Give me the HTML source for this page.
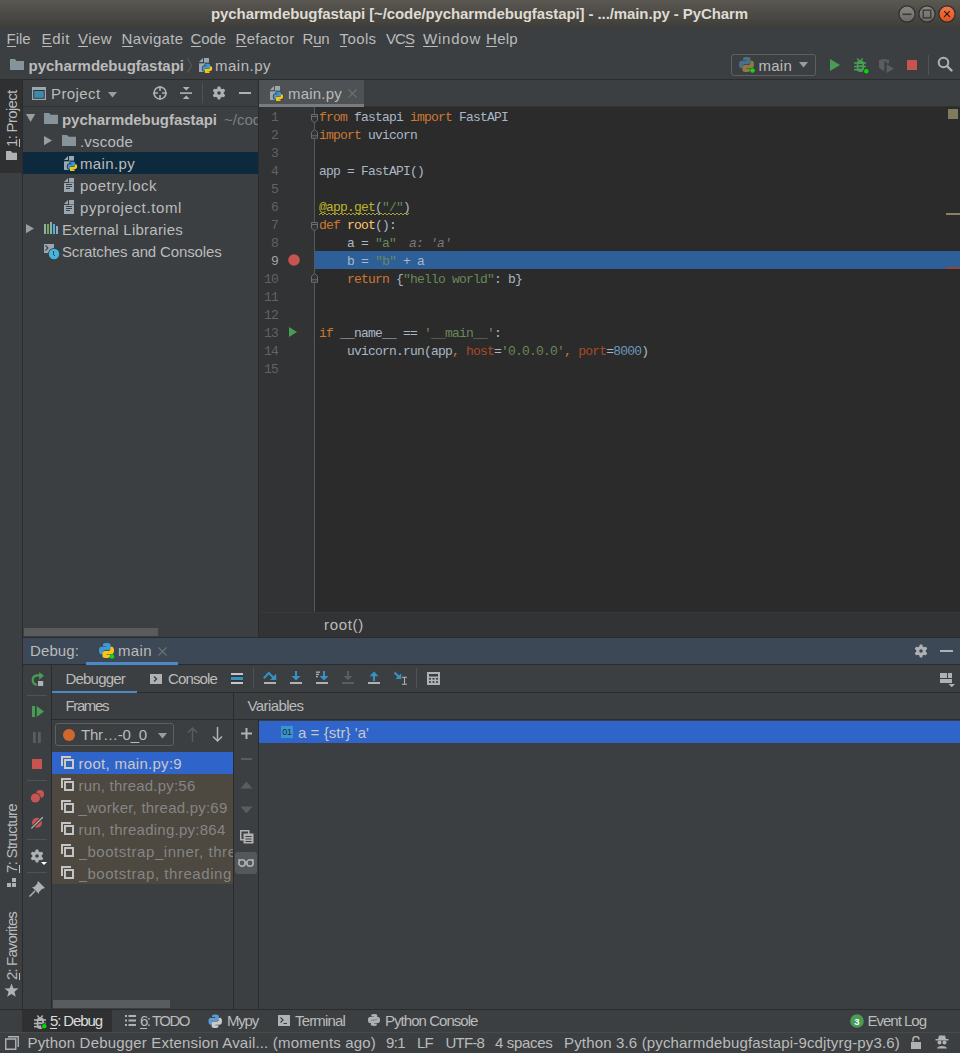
<!DOCTYPE html>
<html><head><meta charset="utf-8"><style>
html,body{margin:0;padding:0;}
body{width:960px;height:1053px;position:relative;overflow:hidden;background:#3c3f41;font-family:'Liberation Sans', sans-serif;}
u{text-decoration:none;background:linear-gradient(currentColor,currentColor) no-repeat 0 100%/100% 1px;}
</style></head><body>
<div style="position:absolute;left:0px;top:0px;width:960px;height:28px;background:linear-gradient(#5b5852,#3e3d39);"></div>
<div id="t0" style="position:absolute;left:211px;top:6.30px;font-family:'Liberation Sans', sans-serif;font-size:15px;line-height:15px;color:#dfdbd2;font-weight:bold;white-space:pre;letter-spacing:-0.095px;">pycharmdebugfastapi [~/code/pycharmdebugfastapi] - .../main.py - PyCharm</div>
<svg style="position:absolute;left:897px;top:4px;" width="60" height="20" viewBox="0 0 60 20">
<defs><linearGradient id="gb" x1="0" y1="0" x2="0" y2="1"><stop offset="0" stop-color="#8a8883"/><stop offset="1" stop-color="#6a6864"/></linearGradient>
<linearGradient id="gc" x1="0" y1="0" x2="0" y2="1"><stop offset="0" stop-color="#f37a49"/><stop offset="1" stop-color="#e0501c"/></linearGradient></defs>
<circle cx="10" cy="10" r="8.1" fill="url(#gb)" stroke="#2f2e2b" stroke-width="1.2"/>
<rect x="5.5" y="9.5" width="9" height="1.6" fill="#3b3a36"/>
<circle cx="30" cy="10" r="8.1" fill="url(#gb)" stroke="#2f2e2b" stroke-width="1.2"/>
<rect x="26.2" y="6.2" width="7.6" height="7.6" fill="none" stroke="#3b3a36" stroke-width="1.4"/>
<circle cx="50" cy="10" r="8.1" fill="url(#gc)" stroke="#2f2e2b" stroke-width="1.2"/>
<path d="M47.2 7.2 L52.8 12.8 M52.8 7.2 L47.2 12.8" stroke="#2e1a10" stroke-width="1.2"/><circle cx="50" cy="10" r="0.9" fill="#2e1a10"/>
</svg>
<div id="t1" style="position:absolute;left:6.5px;top:31.30px;font-family:'Liberation Sans', sans-serif;font-size:15px;line-height:15px;color:#bbbbbb;font-weight:normal;white-space:pre;letter-spacing:-0.047px;"><u>F</u>ile</div>
<div id="t2" style="position:absolute;left:41.5px;top:31.30px;font-family:'Liberation Sans', sans-serif;font-size:15px;line-height:15px;color:#bbbbbb;font-weight:normal;white-space:pre;letter-spacing:0.660px;"><u>E</u>dit</div>
<div id="t3" style="position:absolute;left:78px;top:31.30px;font-family:'Liberation Sans', sans-serif;font-size:15px;line-height:15px;color:#bbbbbb;font-weight:normal;white-space:pre;letter-spacing:0.438px;"><u>V</u>iew</div>
<div id="t4" style="position:absolute;left:121.5px;top:31.30px;font-family:'Liberation Sans', sans-serif;font-size:15px;line-height:15px;color:#bbbbbb;font-weight:normal;white-space:pre;letter-spacing:0.348px;"><u>N</u>avigate</div>
<div id="t5" style="position:absolute;left:190.5px;top:31.30px;font-family:'Liberation Sans', sans-serif;font-size:15px;line-height:15px;color:#bbbbbb;font-weight:normal;white-space:pre;letter-spacing:-0.094px;"><u>C</u>ode</div>
<div id="t6" style="position:absolute;left:235.5px;top:31.30px;font-family:'Liberation Sans', sans-serif;font-size:15px;line-height:15px;color:#bbbbbb;font-weight:normal;white-space:pre;letter-spacing:0.287px;"><u>R</u>efactor</div>
<div id="t7" style="position:absolute;left:302.5px;top:31.30px;font-family:'Liberation Sans', sans-serif;font-size:15px;line-height:15px;color:#bbbbbb;font-weight:normal;white-space:pre;letter-spacing:-0.177px;">R<u>u</u>n</div>
<div id="t8" style="position:absolute;left:339.5px;top:31.30px;font-family:'Liberation Sans', sans-serif;font-size:15px;line-height:15px;color:#bbbbbb;font-weight:normal;white-space:pre;letter-spacing:0.394px;"><u>T</u>ools</div>
<div id="t9" style="position:absolute;left:386px;top:31.30px;font-family:'Liberation Sans', sans-serif;font-size:15px;line-height:15px;color:#bbbbbb;font-weight:normal;white-space:pre;letter-spacing:-0.953px;">VC<u>S</u></div>
<div id="t10" style="position:absolute;left:423px;top:31.30px;font-family:'Liberation Sans', sans-serif;font-size:15px;line-height:15px;color:#bbbbbb;font-weight:normal;white-space:pre;letter-spacing:0.771px;"><u>W</u>indow</div>
<div id="t11" style="position:absolute;left:486px;top:31.30px;font-family:'Liberation Sans', sans-serif;font-size:15px;line-height:15px;color:#bbbbbb;font-weight:normal;white-space:pre;letter-spacing:0.281px;"><u>H</u>elp</div>
<div style="position:absolute;left:0px;top:79px;width:960px;height:1px;background:#2b2b2b;"></div>
<svg style="position:absolute;left:10px;top:58px;" width="15" height="13" viewBox="0 0 15 13"><path d="M0 1 H5 L6.5 3 H14 V12 H0 Z" fill="#87939a"/></svg>
<div id="t12" style="position:absolute;left:28.5px;top:58.30px;font-family:'Liberation Sans', sans-serif;font-size:15px;line-height:15px;color:#bbbbbb;font-weight:bold;white-space:pre;letter-spacing:-0.020px;">pycharmdebugfastapi</div>
<svg style="position:absolute;left:186px;top:57px;" width="8" height="17" viewBox="0 0 8 17"><path d="M1.4 1.2 L5.6 8.5 L1.4 15.5" fill="none" stroke="#5d6062" stroke-width="1"/></svg>
<svg style="position:absolute;left:199px;top:58px;" width="15" height="15" viewBox="0 0 15 15"><path d="M0 4 L4 0 V4 Z" fill="#9aa7b0"/><path d="M5 0 H10 V4.6 H5 Z" fill="#9aa7b0"/><path d="M0 5.3 H10 V14 H0 Z" fill="#9aa7b0"/><g transform="translate(3.6 5.8) scale(0.6)" fill="#3c3f41" stroke="#3c3f41" stroke-width="2.67"><path d="M7.9 0 C4 0 4.3 1.7 4.3 1.7 V3.4 H8 V4 H2.8 C2.8 4 0 3.7 0 8 C0 12.2 2.4 12 2.4 12 H3.9 V10 C3.9 10 3.8 7.6 6.3 7.6 H10 C10 7.6 12.3 7.6 12.3 5.4 V1.9 C12.3 1.9 12.6 0 7.9 0 Z"/><path d="M8.1 16 C12 16 11.7 14.3 11.7 14.3 V12.6 H8 V12 H13.2 C13.2 12 16 12.3 16 8 C16 3.8 13.6 4 13.6 4 H12.1 V6 C12.1 6 12.2 8.4 9.7 8.4 H6 C6 8.4 3.7 8.4 3.7 10.6 V14.1 C3.7 14.1 3.4 16 8.1 16 Z"/></g><g transform="translate(3.6 5.8) scale(0.6)"><path d="M7.9 0 C4 0 4.3 1.7 4.3 1.7 V3.4 H8 V4 H2.8 C2.8 4 0 3.7 0 8 C0 12.2 2.4 12 2.4 12 H3.9 V10 C3.9 10 3.8 7.6 6.3 7.6 H10 C10 7.6 12.3 7.6 12.3 5.4 V1.9 C12.3 1.9 12.6 0 7.9 0 Z" fill="#3d9ad6"/><path d="M8.1 16 C12 16 11.7 14.3 11.7 14.3 V12.6 H8 V12 H13.2 C13.2 12 16 12.3 16 8 C16 3.8 13.6 4 13.6 4 H12.1 V6 C12.1 6 12.2 8.4 9.7 8.4 H6 C6 8.4 3.7 8.4 3.7 10.6 V14.1 C3.7 14.1 3.4 16 8.1 16 Z" fill="#f5c518"/></g></svg>
<div id="t13" style="position:absolute;left:215px;top:58.30px;font-family:'Liberation Sans', sans-serif;font-size:15px;line-height:15px;color:#bbbbbb;font-weight:normal;white-space:pre;letter-spacing:0.496px;">main.py</div>
<div style="position:absolute;left:731px;top:54px;width:83px;height:20px;border:1px solid #5e6060;border-radius:3px;"></div>
<svg style="position:absolute;left:739px;top:57px;" width="16" height="16" viewBox="0 0 16 16"><g transform="translate(0 0) scale(0.9375)"><path d="M7.9 0 C4 0 4.3 1.7 4.3 1.7 V3.4 H8 V4 H2.8 C2.8 4 0 3.7 0 8 C0 12.2 2.4 12 2.4 12 H3.9 V10 C3.9 10 3.8 7.6 6.3 7.6 H10 C10 7.6 12.3 7.6 12.3 5.4 V1.9 C12.3 1.9 12.6 0 7.9 0 Z" fill="#4a6f8a"/><path d="M8.1 16 C12 16 11.7 14.3 11.7 14.3 V12.6 H8 V12 H13.2 C13.2 12 16 12.3 16 8 C16 3.8 13.6 4 13.6 4 H12.1 V6 C12.1 6 12.2 8.4 9.7 8.4 H6 C6 8.4 3.7 8.4 3.7 10.6 V14.1 C3.7 14.1 3.4 16 8.1 16 Z" fill="#8c7b3e"/></g><circle cx="13.5" cy="13.5" r="2.3" fill="#14d414"/></svg>
<div id="t14" style="position:absolute;left:758.5px;top:58.30px;font-family:'Liberation Sans', sans-serif;font-size:15px;line-height:15px;color:#bbbbbb;font-weight:normal;white-space:pre;letter-spacing:0.246px;">main</div>
<svg style="position:absolute;left:799px;top:62px;" width="10" height="6" viewBox="0 0 10 6"><path d="M0 0 H9 L4.5 5.5 Z" fill="#9a9c9e"/></svg>
<svg style="position:absolute;left:830px;top:59px;" width="11" height="12" viewBox="0 0 11 12"><path d="M0 0 L10 6 L0 12 Z" fill="#499c54"/></svg>
<svg style="position:absolute;left:850px;top:54px;" width="22" height="22" viewBox="0 0 22 22"><path d="M7.3 4.4 L9.4 6.9 M12.7 4.4 L10.6 6.9" stroke="#499c54" stroke-width="1.5"/>
<rect x="6.8" y="6.4" width="7.2" height="11.5" rx="3.2" fill="#499c54"/>
<rect x="4" y="8.2" width="12" height="1.6" fill="#499c54"/><rect x="4" y="11.7" width="12" height="1.6" fill="#499c54"/><rect x="4" y="14.9" width="12" height="1.6" fill="#499c54"/>
<rect x="8.4" y="10" width="3.8" height="1.3" fill="#3c3f41"/><rect x="8.4" y="13.2" width="3.8" height="1.3" fill="#3c3f41"/>
<circle cx="16.3" cy="17.2" r="3" fill="#3c3f41"/><circle cx="16.3" cy="17.2" r="2.2" fill="#00e000"/></svg>
<svg style="position:absolute;left:874px;top:54px;" width="24" height="22" viewBox="0 0 24 22"><g transform="translate(-874 -54)" fill="#5c5d5e"><path d="M879 60 L884 59 L889 60 V63.2 H886.3 V61.3 H884.3 V69.5 Q884.3 71 882.8 70.6 L879.8 68.2 Q879 67.5 879 66.5 Z"/><path d="M886.7 64.3 L894 68.6 L886.7 73 Z"/></g></svg>
<div style="position:absolute;left:907px;top:60px;width:10px;height:10px;background:#c75450;"></div>
<div style="position:absolute;left:928px;top:55px;width:1px;height:20px;background:#505355;"></div>
<svg style="position:absolute;left:937px;top:56px;" width="17" height="17" viewBox="0 0 17 17"><circle cx="6.5" cy="6.5" r="4.8" fill="none" stroke="#afb1b3" stroke-width="2"/><path d="M10 10 L14.5 14.5" stroke="#afb1b3" stroke-width="2.4" stroke-linecap="round"/></svg>
<div style="position:absolute;left:22px;top:80px;width:1px;height:929px;background:#2b2b2b;"></div>
<div style="position:absolute;left:0px;top:80px;width:22px;height:93px;background:#2e3031;"></div>
<div style="position:absolute;left:23px;top:106px;width:235px;height:1px;background:#323232;"></div>
<svg style="position:absolute;left:32px;top:87px;" width="14" height="13" viewBox="0 0 14 13"><rect x="0" y="0" width="14" height="13" fill="#9aa7b0"/><rect x="1.3" y="3" width="11.4" height="8.7" fill="#2d2f30"/><rect x="2.2" y="4" width="9.6" height="6.8" fill="#3e8aab"/></svg>
<div id="t15" style="position:absolute;left:51px;top:85.80px;font-family:'Liberation Sans', sans-serif;font-size:15px;line-height:15px;color:#bbbbbb;font-weight:normal;white-space:pre;letter-spacing:0.402px;">Project</div>
<svg style="position:absolute;left:108px;top:92px;" width="10" height="6" viewBox="0 0 10 6"><path d="M0 0 H9 L4.5 5.5 Z" fill="#9a9c9e"/></svg>
<svg style="position:absolute;left:152px;top:85px;" width="16" height="16" viewBox="0 0 16 16"><circle cx="8" cy="8" r="6" fill="none" stroke="#afb1b3" stroke-width="1.6"/><path d="M8 1 V15 M1 8 H15" stroke="#afb1b3" stroke-width="1.6"/><circle cx="8" cy="8" r="2.2" fill="#3c3f41"/></svg>
<svg style="position:absolute;left:176px;top:82px;" width="20" height="20" viewBox="0 0 20 20"><g transform="translate(-176 -82)"><rect x="180" y="92.3" width="12" height="1.6" fill="#afb1b3"/><path d="M182.8 87 H189.7 L186.25 90.5 Z M182.8 99 H189.7 L186.25 95.6 Z" fill="#afb1b3"/></g></svg>
<div style="position:absolute;left:202px;top:83px;width:1px;height:20px;background:#505355;"></div>
<svg style="position:absolute;left:212px;top:86px;" width="14" height="14" viewBox="0 0 14 14"><g fill="#afb1b3"><circle cx="7" cy="7" r="4.8"/>
<rect x="5.5" y="0.5" width="3" height="13" rx="0.8"/>
<rect x="5.5" y="0.5" width="3" height="13" rx="0.8" transform="rotate(60 7 7)"/><rect x="5.5" y="0.5" width="3" height="13" rx="0.8" transform="rotate(-60 7 7)"/></g>
<circle cx="7" cy="7" r="1.8" fill="#3c3f41"/></svg>
<div style="position:absolute;left:239px;top:92px;width:12px;height:2px;background:#afb1b3;"></div>
<div style="position:absolute;left:23px;top:152px;width:235px;height:22px;background:#0d293e;"></div>
<svg style="position:absolute;left:26px;top:114px;" width="10" height="9" viewBox="0 0 10 9"><path d="M0 0 H9.2 L4.6 8 Z" fill="#9a9c9e"/></svg>
<svg style="position:absolute;left:44px;top:113px;" width="16" height="13" viewBox="0 0 16 13"><path d="M0 0 H5 L6.8 1.7 H14 V11 H0 Z" fill="#87939a"/></svg>
<div id="t16" style="position:absolute;left:62px;top:112.30px;font-family:'Liberation Sans', sans-serif;font-size:15px;line-height:15px;color:#bbbbbb;font-weight:bold;white-space:pre;letter-spacing:-0.046px;">pycharmdebugfastapi</div>
<div id="t17" style="position:absolute;left:224px;top:112.30px;font-family:'Liberation Sans', sans-serif;font-size:15px;line-height:15px;color:#7d7f81;font-weight:normal;white-space:pre;letter-spacing:0.000px;">~/code/pycharmdebugfastapi</div>
<svg style="position:absolute;left:44px;top:136px;" width="9" height="10" viewBox="0 0 9 10"><path d="M0 0 L8 4.6 L0 9.2 Z" fill="#9a9c9e"/></svg>
<svg style="position:absolute;left:62px;top:135px;" width="16" height="13" viewBox="0 0 16 13"><path d="M0 0 H5 L6.8 1.7 H14 V11 H0 Z" fill="#87939a"/></svg>
<div id="t18" style="position:absolute;left:80px;top:134.30px;font-family:'Liberation Sans', sans-serif;font-size:15px;line-height:15px;color:#bbbbbb;font-weight:normal;white-space:pre;letter-spacing:0.185px;">.vscode</div>
<svg style="position:absolute;left:64px;top:156px;" width="15" height="15" viewBox="0 0 15 15"><path d="M0 4 L4 0 V4 Z" fill="#9aa7b0"/><path d="M5 0 H10 V4.6 H5 Z" fill="#9aa7b0"/><path d="M0 5.3 H10 V14 H0 Z" fill="#9aa7b0"/><g transform="translate(3.6 5.8) scale(0.6)" fill="#0d293e" stroke="#0d293e" stroke-width="2.67"><path d="M7.9 0 C4 0 4.3 1.7 4.3 1.7 V3.4 H8 V4 H2.8 C2.8 4 0 3.7 0 8 C0 12.2 2.4 12 2.4 12 H3.9 V10 C3.9 10 3.8 7.6 6.3 7.6 H10 C10 7.6 12.3 7.6 12.3 5.4 V1.9 C12.3 1.9 12.6 0 7.9 0 Z"/><path d="M8.1 16 C12 16 11.7 14.3 11.7 14.3 V12.6 H8 V12 H13.2 C13.2 12 16 12.3 16 8 C16 3.8 13.6 4 13.6 4 H12.1 V6 C12.1 6 12.2 8.4 9.7 8.4 H6 C6 8.4 3.7 8.4 3.7 10.6 V14.1 C3.7 14.1 3.4 16 8.1 16 Z"/></g><g transform="translate(3.6 5.8) scale(0.6)"><path d="M7.9 0 C4 0 4.3 1.7 4.3 1.7 V3.4 H8 V4 H2.8 C2.8 4 0 3.7 0 8 C0 12.2 2.4 12 2.4 12 H3.9 V10 C3.9 10 3.8 7.6 6.3 7.6 H10 C10 7.6 12.3 7.6 12.3 5.4 V1.9 C12.3 1.9 12.6 0 7.9 0 Z" fill="#3d9ad6"/><path d="M8.1 16 C12 16 11.7 14.3 11.7 14.3 V12.6 H8 V12 H13.2 C13.2 12 16 12.3 16 8 C16 3.8 13.6 4 13.6 4 H12.1 V6 C12.1 6 12.2 8.4 9.7 8.4 H6 C6 8.4 3.7 8.4 3.7 10.6 V14.1 C3.7 14.1 3.4 16 8.1 16 Z" fill="#f5c518"/></g></svg>
<div id="t19" style="position:absolute;left:80px;top:156.30px;font-family:'Liberation Sans', sans-serif;font-size:15px;line-height:15px;color:#bbbbbb;font-weight:normal;white-space:pre;letter-spacing:0.353px;">main.py</div>
<svg style="position:absolute;left:64px;top:178px;" width="11" height="15" viewBox="0 0 11 15"><path d="M0 4 L4 0 V4 Z" fill="#9aa7b0"/><path d="M5 0 H10 V4.5 H5 Z" fill="#9aa7b0"/><path d="M0 5 H10 V14 H0 Z" fill="#9aa7b0"/><rect x="2" y="6" width="6" height="1" fill="#3c3f41"/><rect x="2" y="8" width="6" height="1" fill="#3c3f41"/><rect x="2" y="10" width="4" height="1" fill="#3c3f41"/></svg>
<div id="t20" style="position:absolute;left:80px;top:178.30px;font-family:'Liberation Sans', sans-serif;font-size:15px;line-height:15px;color:#bbbbbb;font-weight:normal;white-space:pre;letter-spacing:0.507px;">poetry.lock</div>
<svg style="position:absolute;left:64px;top:200px;" width="11" height="15" viewBox="0 0 11 15"><path d="M0 4 L4 0 V4 Z" fill="#9aa7b0"/><path d="M5 0 H10 V4.5 H5 Z" fill="#9aa7b0"/><path d="M0 5 H10 V14 H0 Z" fill="#9aa7b0"/><rect x="2" y="6" width="6" height="1" fill="#3c3f41"/><rect x="2" y="8" width="6" height="1" fill="#3c3f41"/><rect x="2" y="10" width="4" height="1" fill="#3c3f41"/></svg>
<div id="t21" style="position:absolute;left:80px;top:200.30px;font-family:'Liberation Sans', sans-serif;font-size:15px;line-height:15px;color:#bbbbbb;font-weight:normal;white-space:pre;letter-spacing:0.616px;">pyproject.toml</div>
<svg style="position:absolute;left:26px;top:224px;" width="9" height="10" viewBox="0 0 9 10"><path d="M0 0 L8 4.6 L0 9.2 Z" fill="#9a9c9e"/></svg>
<svg style="position:absolute;left:44px;top:222px;" width="15" height="12" viewBox="0 0 15 12"><rect x="0" y="2" width="2" height="10" fill="#9aa7b0"/><rect x="3" y="2" width="2" height="10" fill="#62b543"/><rect x="6" y="0" width="2" height="12" fill="#9aa7b0"/><rect x="9" y="2" width="2" height="10" fill="#40b6e0"/><rect x="12" y="4" width="2" height="8" fill="#9aa7b0"/></svg>
<div id="t22" style="position:absolute;left:62px;top:222.30px;font-family:'Liberation Sans', sans-serif;font-size:15px;line-height:15px;color:#bbbbbb;font-weight:normal;white-space:pre;letter-spacing:0.238px;">External Libraries</div>
<svg style="position:absolute;left:44px;top:244px;" width="17" height="17" viewBox="0 0 17 17"><path d="M0 0 H10 V9 H0 Z" fill="#9aa7b0"/><path d="M1.5 1.5 L4 4 L1.5 6.5" stroke="#3c3f41" fill="none" stroke-width="1.1"/><circle cx="10" cy="10" r="6" fill="#3c3f41"/><circle cx="10" cy="10" r="5.2" fill="#40b6e0"/><path d="M9.5 7 V10.5 L11 12" stroke="#3c3f41" fill="none" stroke-width="1"/></svg>
<div id="t23" style="position:absolute;left:62px;top:244.30px;font-family:'Liberation Sans', sans-serif;font-size:15px;line-height:15px;color:#bbbbbb;font-weight:normal;white-space:pre;letter-spacing:-0.141px;">Scratches and Consoles</div>
<div style="position:absolute;left:24px;top:628px;width:134px;height:8px;background:#595b5d;"></div>
<div id="t24" style="position:absolute;left:4.30px;top:146.50px;transform-origin:0 0;transform:rotate(-90deg);font-family:'Liberation Sans', sans-serif;font-size:15px;line-height:15px;color:#bbbbbb;font-weight:normal;white-space:pre;letter-spacing:-0.688px;"><u>1</u>: Project</div>
<svg style="position:absolute;left:6px;top:151px;" width="12" height="10" viewBox="0 0 12 10"><path d="M0 0 H5 L6.2 1.8 H11 V9 H0 Z" fill="#afb1b3"/></svg>
<div id="t25" style="position:absolute;left:4.30px;top:872.50px;transform-origin:0 0;transform:rotate(-90deg);font-family:'Liberation Sans', sans-serif;font-size:15px;line-height:15px;color:#bbbbbb;font-weight:normal;white-space:pre;letter-spacing:-0.712px;"><u>7</u>: Structure</div>
<svg style="position:absolute;left:7px;top:878px;" width="10" height="10" viewBox="0 0 10 10"><rect x="0" y="5" width="4" height="4" fill="#afb1b3"/><rect x="5" y="5" width="4" height="4" fill="#afb1b3"/><rect x="5" y="0" width="4" height="4" fill="#afb1b3"/></svg>
<div id="t26" style="position:absolute;left:4.30px;top:980.00px;transform-origin:0 0;transform:rotate(-90deg);font-family:'Liberation Sans', sans-serif;font-size:15px;line-height:15px;color:#bbbbbb;font-weight:normal;white-space:pre;letter-spacing:-0.865px;"><u>2</u>: Favorites</div>
<svg style="position:absolute;left:4px;top:983px;" width="15" height="15" viewBox="0 0 15 15"><path d="M7.5 0.5 L9.3 5.3 L14.5 5.5 L10.4 8.7 L11.8 13.8 L7.5 10.9 L3.2 13.8 L4.6 8.7 L0.5 5.5 L5.7 5.3 Z" fill="#afb1b3"/></svg>
<div style="position:absolute;left:258px;top:80px;width:1px;height:558px;background:#2b2b2b;"></div>
<div style="position:absolute;left:259px;top:80px;width:701px;height:27px;background:#3c3f41;"></div>
<div style="position:absolute;left:259px;top:80px;width:105px;height:24px;background:#4e5254;"></div>
<div style="position:absolute;left:259px;top:104px;width:105px;height:3px;background:#787c80;"></div>
<div style="position:absolute;left:364px;top:106px;width:596px;height:1px;background:#323232;"></div>
<svg style="position:absolute;left:270px;top:86px;" width="15" height="15" viewBox="0 0 15 15"><path d="M0 4 L4 0 V4 Z" fill="#9aa7b0"/><path d="M5 0 H10 V4.6 H5 Z" fill="#9aa7b0"/><path d="M0 5.3 H10 V14 H0 Z" fill="#9aa7b0"/><g transform="translate(3.6 5.8) scale(0.6)" fill="#3c3f41" stroke="#3c3f41" stroke-width="2.67"><path d="M7.9 0 C4 0 4.3 1.7 4.3 1.7 V3.4 H8 V4 H2.8 C2.8 4 0 3.7 0 8 C0 12.2 2.4 12 2.4 12 H3.9 V10 C3.9 10 3.8 7.6 6.3 7.6 H10 C10 7.6 12.3 7.6 12.3 5.4 V1.9 C12.3 1.9 12.6 0 7.9 0 Z"/><path d="M8.1 16 C12 16 11.7 14.3 11.7 14.3 V12.6 H8 V12 H13.2 C13.2 12 16 12.3 16 8 C16 3.8 13.6 4 13.6 4 H12.1 V6 C12.1 6 12.2 8.4 9.7 8.4 H6 C6 8.4 3.7 8.4 3.7 10.6 V14.1 C3.7 14.1 3.4 16 8.1 16 Z"/></g><g transform="translate(3.6 5.8) scale(0.6)"><path d="M7.9 0 C4 0 4.3 1.7 4.3 1.7 V3.4 H8 V4 H2.8 C2.8 4 0 3.7 0 8 C0 12.2 2.4 12 2.4 12 H3.9 V10 C3.9 10 3.8 7.6 6.3 7.6 H10 C10 7.6 12.3 7.6 12.3 5.4 V1.9 C12.3 1.9 12.6 0 7.9 0 Z" fill="#3d9ad6"/><path d="M8.1 16 C12 16 11.7 14.3 11.7 14.3 V12.6 H8 V12 H13.2 C13.2 12 16 12.3 16 8 C16 3.8 13.6 4 13.6 4 H12.1 V6 C12.1 6 12.2 8.4 9.7 8.4 H6 C6 8.4 3.7 8.4 3.7 10.6 V14.1 C3.7 14.1 3.4 16 8.1 16 Z" fill="#f5c518"/></g></svg>
<div id="t27" style="position:absolute;left:288px;top:85.80px;font-family:'Liberation Sans', sans-serif;font-size:15px;line-height:15px;color:#bbbbbb;font-weight:normal;white-space:pre;letter-spacing:0.210px;">main.py</div>
<svg style="position:absolute;left:348px;top:89px;" width="9" height="9" viewBox="0 0 9 9"><path d="M0.5 0.5 L8.5 8.5 M8.5 0.5 L0.5 8.5" stroke="#6e7173" stroke-width="1.1"/></svg>
<div style="position:absolute;left:259px;top:107px;width:55px;height:504px;background:#313335;"></div>
<div style="position:absolute;left:314px;top:107px;width:1px;height:504px;background:#555759;"></div>
<div style="position:absolute;left:315px;top:107px;width:645px;height:504px;background:#2b2b2b;"></div>
<div style="position:absolute;left:315px;top:251px;width:645px;height:18px;background:#2d6099;"></div>
<div style="position:absolute;left:948px;top:109px;width:10px;height:10px;background:#807a5e;"></div>
<div style="position:absolute;left:946px;top:213px;width:14px;height:2px;background:#8c8263;"></div>
<div style="position:absolute;left:946px;top:267px;width:14px;height:2px;background:#8a4a3a;"></div>
<div style="position:absolute;left:271px;top:111.04px;font-family:'Liberation Mono', monospace;font-size:13px;line-height:13px;letter-spacing:-0.801px;color:#606366;white-space:pre">1</div>
<div style="position:absolute;left:319px;top:111.04px;font-family:'Liberation Mono', monospace;font-size:13px;line-height:13px;letter-spacing:-0.801px;color:#a9b7c6;white-space:pre"><span style="color:#cc7832">from</span><span style="color:#a9b7c6"> fastapi </span><span style="color:#cc7832">import</span><span style="color:#a9b7c6"> FastAPI</span></div>
<div style="position:absolute;left:271px;top:129.04px;font-family:'Liberation Mono', monospace;font-size:13px;line-height:13px;letter-spacing:-0.801px;color:#606366;white-space:pre">2</div>
<div style="position:absolute;left:319px;top:129.04px;font-family:'Liberation Mono', monospace;font-size:13px;line-height:13px;letter-spacing:-0.801px;color:#a9b7c6;white-space:pre"><span style="color:#cc7832">import</span><span style="color:#a9b7c6"> uvicorn</span></div>
<div style="position:absolute;left:271px;top:147.04px;font-family:'Liberation Mono', monospace;font-size:13px;line-height:13px;letter-spacing:-0.801px;color:#606366;white-space:pre">3</div>
<div style="position:absolute;left:271px;top:165.04px;font-family:'Liberation Mono', monospace;font-size:13px;line-height:13px;letter-spacing:-0.801px;color:#606366;white-space:pre">4</div>
<div style="position:absolute;left:319px;top:165.04px;font-family:'Liberation Mono', monospace;font-size:13px;line-height:13px;letter-spacing:-0.801px;color:#a9b7c6;white-space:pre"><span style="color:#a9b7c6">app = FastAPI()</span></div>
<div style="position:absolute;left:271px;top:183.04px;font-family:'Liberation Mono', monospace;font-size:13px;line-height:13px;letter-spacing:-0.801px;color:#606366;white-space:pre">5</div>
<div style="position:absolute;left:271px;top:201.04px;font-family:'Liberation Mono', monospace;font-size:13px;line-height:13px;letter-spacing:-0.801px;color:#606366;white-space:pre">6</div>
<div style="position:absolute;left:319px;top:201.04px;font-family:'Liberation Mono', monospace;font-size:13px;line-height:13px;letter-spacing:-0.801px;color:#a9b7c6;white-space:pre"><span style="color:#bbb529">@app.get</span><span style="color:#a9b7c6">(</span><span style="color:#6a8759">"/"</span><span style="color:#a9b7c6">)</span></div>
<div style="position:absolute;left:271px;top:219.04px;font-family:'Liberation Mono', monospace;font-size:13px;line-height:13px;letter-spacing:-0.801px;color:#606366;white-space:pre">7</div>
<div style="position:absolute;left:319px;top:219.04px;font-family:'Liberation Mono', monospace;font-size:13px;line-height:13px;letter-spacing:-0.801px;color:#a9b7c6;white-space:pre"><span style="color:#cc7832">def</span><span style="color:#a9b7c6"> </span><span style="color:#ffc66d">root</span><span style="color:#a9b7c6">():</span></div>
<div style="position:absolute;left:271px;top:237.04px;font-family:'Liberation Mono', monospace;font-size:13px;line-height:13px;letter-spacing:-0.801px;color:#606366;white-space:pre">8</div>
<div style="position:absolute;left:319px;top:237.04px;font-family:'Liberation Mono', monospace;font-size:13px;line-height:13px;letter-spacing:-0.801px;color:#a9b7c6;white-space:pre"><span style="color:#a9b7c6">    a = </span><span style="color:#6a8759">"a"</span></div>
<div style="position:absolute;left:271px;top:255.04px;font-family:'Liberation Mono', monospace;font-size:13px;line-height:13px;letter-spacing:-0.801px;color:#a4a3a3;white-space:pre">9</div>
<div style="position:absolute;left:319px;top:255.04px;font-family:'Liberation Mono', monospace;font-size:13px;line-height:13px;letter-spacing:-0.801px;color:#a9b7c6;white-space:pre"><span style="color:#a9b7c6">    b = </span><span style="color:#6a8759">"b"</span><span style="color:#a9b7c6"> + a</span></div>
<div style="position:absolute;left:264px;top:273.04px;font-family:'Liberation Mono', monospace;font-size:13px;line-height:13px;letter-spacing:-0.801px;color:#606366;white-space:pre">10</div>
<div style="position:absolute;left:319px;top:273.04px;font-family:'Liberation Mono', monospace;font-size:13px;line-height:13px;letter-spacing:-0.801px;color:#a9b7c6;white-space:pre"><span style="color:#a9b7c6">    </span><span style="color:#cc7832">return</span><span style="color:#a9b7c6"> {</span><span style="color:#6a8759">"hello world"</span><span style="color:#a9b7c6">: b}</span></div>
<div style="position:absolute;left:264px;top:291.04px;font-family:'Liberation Mono', monospace;font-size:13px;line-height:13px;letter-spacing:-0.801px;color:#606366;white-space:pre">11</div>
<div style="position:absolute;left:264px;top:309.04px;font-family:'Liberation Mono', monospace;font-size:13px;line-height:13px;letter-spacing:-0.801px;color:#606366;white-space:pre">12</div>
<div style="position:absolute;left:264px;top:327.04px;font-family:'Liberation Mono', monospace;font-size:13px;line-height:13px;letter-spacing:-0.801px;color:#606366;white-space:pre">13</div>
<div style="position:absolute;left:319px;top:327.04px;font-family:'Liberation Mono', monospace;font-size:13px;line-height:13px;letter-spacing:-0.801px;color:#a9b7c6;white-space:pre"><span style="color:#cc7832">if</span><span style="color:#a9b7c6"> __name__ == </span><span style="color:#6a8759">'__main__'</span><span style="color:#a9b7c6">:</span></div>
<div style="position:absolute;left:264px;top:345.04px;font-family:'Liberation Mono', monospace;font-size:13px;line-height:13px;letter-spacing:-0.801px;color:#606366;white-space:pre">14</div>
<div style="position:absolute;left:319px;top:345.04px;font-family:'Liberation Mono', monospace;font-size:13px;line-height:13px;letter-spacing:-0.801px;color:#a9b7c6;white-space:pre"><span style="color:#a9b7c6">    uvicorn.run(app</span><span style="color:#cc7832">,</span><span style="color:#a9b7c6"> </span><span style="color:#aa4926">host</span><span style="color:#a9b7c6">=</span><span style="color:#6a8759">'0.0.0.0'</span><span style="color:#cc7832">,</span><span style="color:#a9b7c6"> </span><span style="color:#aa4926">port</span><span style="color:#a9b7c6">=</span><span style="color:#6897bb">8000</span><span style="color:#a9b7c6">)</span></div>
<div style="position:absolute;left:264px;top:363.04px;font-family:'Liberation Mono', monospace;font-size:13px;line-height:13px;letter-spacing:-0.801px;color:#606366;white-space:pre">15</div>
<div style="position:absolute;left:409px;top:237.04px;font-family:'Liberation Mono', monospace;font-size:13px;line-height:13px;letter-spacing:-0.801px;color:#787878;font-style:italic;white-space:pre">a: 'a'</div>
<svg style="position:absolute;left:315px;top:210px;" width="100" height="8" viewBox="0 0 100 8"><polyline transform="translate(-315 -210)" points="319 215 321 213 323 215 325 213 327 215 329 213 331 215 333 213 335 215 337 213 339 215 341 213 343 215 345 213 347 215 349 213 351 215 353 213 355 215 357 213 359 215 361 213 363 215 365 213 367 215 369 213 371 215 373 213 375 215 377 213 379 215 381 213 383 215 385 213 387 215 389 213 391 215 393 213 395 215 397 213 399 215 401 213 403 215 405 213 407 215 409 213" fill="none" stroke="#a8a23a" stroke-width="1"/></svg>
<svg style="position:absolute;left:288px;top:254px;" width="12" height="12" viewBox="0 0 12 12"><circle cx="6" cy="6" r="5.8" fill="#c75450"/></svg>
<svg style="position:absolute;left:289px;top:327px;" width="9" height="10" viewBox="0 0 9 10"><path d="M0 0 L8 5 L0 10 Z" fill="#499c54"/></svg>
<svg style="position:absolute;left:300px;top:100px;" width="30" height="200" viewBox="0 0 30 200"><g transform="translate(-300 -100)"><path d="M311.5 114.5 H317.5 V120 L314.5 123 L311.5 120 Z" fill="#313335" stroke="#6b6d6f" stroke-width="1"/><path d="M312 116.5 H317" stroke="#6b6d6f" stroke-width="1"/><path d="M314.5 129.3 L317.5 132.3 V138.3 H311.5 V132.3 Z" fill="#313335" stroke="#6b6d6f" stroke-width="1"/><path d="M312 135.8 H317" stroke="#6b6d6f" stroke-width="1"/><path d="M311.5 222.5 H317.5 V228 L314.5 231 L311.5 228 Z" fill="#313335" stroke="#6b6d6f" stroke-width="1"/><path d="M312 224.5 H317" stroke="#6b6d6f" stroke-width="1"/><path d="M314.5 273.3 L317.5 276.3 V282.3 H311.5 V276.3 Z" fill="#313335" stroke="#6b6d6f" stroke-width="1"/><path d="M312 279.8 H317" stroke="#6b6d6f" stroke-width="1"/></g></svg>
<div style="position:absolute;left:315px;top:611px;width:645px;height:1px;background:#2b2b2b;"></div>
<div style="position:absolute;left:259px;top:611px;width:55px;height:1px;background:#313335;"></div>
<div style="position:absolute;left:259px;top:612px;width:701px;height:1px;background:#393a3b;"></div>
<div style="position:absolute;left:259px;top:613px;width:701px;height:24px;background:#323334;"></div>
<div id="t28" style="position:absolute;left:324px;top:617.30px;font-family:'Liberation Sans', sans-serif;font-size:15px;line-height:15px;color:#bbbbbb;font-weight:normal;white-space:pre;letter-spacing:0.693px;">root()</div>
<div style="position:absolute;left:23px;top:637px;width:937px;height:1px;background:#2b2b2b;"></div>
<div style="position:absolute;left:23px;top:638px;width:937px;height:26px;background:#3d4856;"></div>
<div style="position:absolute;left:23px;top:664px;width:937px;height:1px;background:#2b2b2b;"></div>
<div id="t29" style="position:absolute;left:30px;top:643.30px;font-family:'Liberation Sans', sans-serif;font-size:15px;line-height:15px;color:#bbbbbb;font-weight:normal;white-space:pre;letter-spacing:0.104px;">Debug:</div>
<svg style="position:absolute;left:99px;top:643px;" width="16" height="16" viewBox="0 0 16 16"><g transform="translate(0 0) scale(0.9375)"><path d="M7.9 0 C4 0 4.3 1.7 4.3 1.7 V3.4 H8 V4 H2.8 C2.8 4 0 3.7 0 8 C0 12.2 2.4 12 2.4 12 H3.9 V10 C3.9 10 3.8 7.6 6.3 7.6 H10 C10 7.6 12.3 7.6 12.3 5.4 V1.9 C12.3 1.9 12.6 0 7.9 0 Z" fill="#3d9ad6"/><path d="M8.1 16 C12 16 11.7 14.3 11.7 14.3 V12.6 H8 V12 H13.2 C13.2 12 16 12.3 16 8 C16 3.8 13.6 4 13.6 4 H12.1 V6 C12.1 6 12.2 8.4 9.7 8.4 H6 C6 8.4 3.7 8.4 3.7 10.6 V14.1 C3.7 14.1 3.4 16 8.1 16 Z" fill="#f5c518"/></g><circle cx="13" cy="13.5" r="2.3" fill="#14d414"/></svg>
<div id="t30" style="position:absolute;left:118px;top:643.30px;font-family:'Liberation Sans', sans-serif;font-size:15px;line-height:15px;color:#bbbbbb;font-weight:normal;white-space:pre;letter-spacing:0.371px;">main</div>
<svg style="position:absolute;left:158px;top:647px;" width="9" height="9" viewBox="0 0 9 9"><path d="M0.5 0.5 L8.5 8.5 M8.5 0.5 L0.5 8.5" stroke="#6e7173" stroke-width="1.1"/></svg>
<div style="position:absolute;left:86px;top:662px;width:92px;height:3px;background:#4a88c7;"></div>
<svg style="position:absolute;left:914px;top:644px;" width="14" height="14" viewBox="0 0 14 14"><g fill="#afb1b3"><circle cx="7" cy="7" r="4.8"/>
<rect x="5.5" y="0.5" width="3" height="13" rx="0.8"/>
<rect x="5.5" y="0.5" width="3" height="13" rx="0.8" transform="rotate(60 7 7)"/><rect x="5.5" y="0.5" width="3" height="13" rx="0.8" transform="rotate(-60 7 7)"/></g>
<circle cx="7" cy="7" r="1.8" fill="#3d4856"/></svg>
<div style="position:absolute;left:940px;top:650px;width:13px;height:2px;background:#afb1b3;"></div>
<div style="position:absolute;left:51px;top:665px;width:1px;height:344px;background:#2b2b2b;"></div>
<div style="position:absolute;left:52px;top:692px;width:908px;height:1px;background:#2b2b2b;"></div>
<div id="t31" style="position:absolute;left:65.5px;top:671.30px;font-family:'Liberation Sans', sans-serif;font-size:15px;line-height:15px;color:#bbbbbb;font-weight:normal;white-space:pre;letter-spacing:-0.799px;">Debugger</div>
<div style="position:absolute;left:52px;top:691px;width:85px;height:2px;background:#4a88c7;"></div>
<svg style="position:absolute;left:150px;top:674px;" width="12" height="10" viewBox="0 0 12 10"><rect x="0" y="0" width="12" height="10" fill="#afb1b3"/><path d="M4 2.5 L6.5 5 L4 7.5" fill="none" stroke="#3c3f41" stroke-width="1.4"/></svg>
<div id="t32" style="position:absolute;left:168px;top:671.30px;font-family:'Liberation Sans', sans-serif;font-size:15px;line-height:15px;color:#bbbbbb;font-weight:normal;white-space:pre;letter-spacing:-0.864px;">Console</div>
<svg style="position:absolute;left:230px;top:672px;" width="14" height="14" viewBox="0 0 14 14"><rect x="1" y="1" width="12" height="2" fill="#c4c5c6"/><rect x="1" y="4" width="12" height="5" fill="#302d2b" opacity="0.6"/><rect x="1" y="5" width="12" height="3" fill="#3592c4"/><rect x="1" y="10" width="12" height="2" fill="#c4c5c6"/></svg>
<div style="position:absolute;left:253px;top:668px;width:1px;height:20px;background:#505355;"></div>
<svg style="position:absolute;left:255px;top:666px;" width="165" height="24" viewBox="0 0 165 24"><g transform="translate(-255 -666)">
<path d="M263.8 678.2 L268.8 673 L273.5 677.8" fill="none" stroke="#3592c4" stroke-width="2"/>
<path d="M276.2 673.8 V680 H270 Z" fill="#3592c4"/>
<rect x="264" y="682" width="12" height="2" fill="#afb1b3"/>
<rect x="295" y="671" width="2" height="5.5" fill="#3592c4"/><path d="M291.5 676 H300.5 L296 680.5 Z" fill="#3592c4"/><rect x="290" y="682" width="12" height="2" fill="#afb1b3"/>
<rect x="316" y="671.5" width="4" height="1.3" fill="#afb1b3"/><rect x="316" y="673.8" width="3" height="1.3" fill="#afb1b3"/><rect x="316" y="676" width="2" height="1.3" fill="#afb1b3"/>
<rect x="323" y="671" width="2" height="5.5" fill="#3592c4"/><path d="M319.5 676 H328.5 L324 680.5 Z" fill="#3592c4"/><rect x="316" y="682" width="12" height="2" fill="#afb1b3"/>
<rect x="347" y="671" width="2" height="5.5" fill="#5a5d5f"/><path d="M343.5 676 H352.5 L348 680.5 Z" fill="#5a5d5f"/><rect x="342" y="682" width="12" height="2" fill="#5a5d5f"/>
<path d="M369.5 676.2 H378.5 L374 671.5 Z" fill="#3592c4"/><rect x="373" y="676" width="2" height="5" fill="#3592c4"/><rect x="368" y="682" width="12" height="2" fill="#afb1b3"/>
<path d="M394.5 672.5 L399.5 677.5" stroke="#3592c4" stroke-width="2.2"/><path d="M401.3 673.3 V679 H395.5 Z" fill="#3592c4"/>
<path d="M402 677.3 H407 M404.5 677.3 V684.3 M402 684.3 H407" stroke="#afb1b3" stroke-width="1.1" fill="none"/>
</g></svg>
<div style="position:absolute;left:416px;top:668px;width:1px;height:20px;background:#505355;"></div>
<svg style="position:absolute;left:427px;top:672px;" width="13" height="13" viewBox="0 0 13 13"><rect x="0" y="0" width="13" height="13" fill="#afb1b3"/><rect x="2" y="2" width="9" height="2.5" fill="#3c3f41"/><g fill="#3c3f41"><rect x="2" y="6" width="2" height="1.6"/><rect x="5.5" y="6" width="2" height="1.6"/><rect x="9" y="6" width="2" height="1.6"/><rect x="2" y="9.2" width="2" height="1.6"/><rect x="5.5" y="9.2" width="2" height="1.6"/><rect x="9" y="9.2" width="2" height="1.6"/></g></svg>
<svg style="position:absolute;left:939px;top:672px;" width="17" height="16" viewBox="0 0 17 16"><rect x="1" y="1" width="7" height="5" fill="#afb1b3"/><rect x="9" y="1" width="4" height="5" fill="#afb1b3"/><rect x="1" y="7" width="12" height="4" fill="#afb1b3"/><path d="M9.5 12 H16 L12.75 15.2 Z" fill="#afb1b3"/></svg>
<svg style="position:absolute;left:24px;top:666px;" width="27" height="24" viewBox="0 0 27 24"><g transform="translate(-24 -666)"><path d="M36.8 684.8 A4.8 4.8 0 0 1 36.8 675.3 H40" fill="none" stroke="#499c54" stroke-width="2.2"/><path d="M39.2 672 L44 675.8 L39.2 679.8 Z" fill="#499c54"/><rect x="38" y="681" width="5.2" height="5" fill="#afb1b3"/></g></svg>
<div style="position:absolute;left:27px;top:695px;width:20px;height:1px;background:#505355;"></div>
<svg style="position:absolute;left:31px;top:706px;" width="14" height="12" viewBox="0 0 14 12"><rect x="1" y="0" width="3" height="11" fill="#499c54"/><path d="M5.7 0 L13 5.5 L5.7 11 Z" fill="#499c54"/></svg>
<svg style="position:absolute;left:33px;top:732px;" width="9" height="11" viewBox="0 0 9 11"><rect x="0" y="0" width="2.8" height="11" fill="#5a5d5f"/><rect x="5" y="0" width="2.8" height="11" fill="#5a5d5f"/></svg>
<div style="position:absolute;left:32px;top:759px;width:10px;height:10px;background:#c75450;"></div>
<div style="position:absolute;left:27px;top:780px;width:20px;height:1px;background:#505355;"></div>
<svg style="position:absolute;left:24px;top:786px;" width="27" height="18" viewBox="0 0 27 18"><g transform="translate(-24 -786)"><circle cx="40" cy="794" r="4" fill="#c75450"/><circle cx="35.4" cy="798" r="5.4" fill="#3c3f41"/><circle cx="35.4" cy="798" r="4.6" fill="#c75450"/></g></svg>
<svg style="position:absolute;left:24px;top:812px;" width="27" height="20" viewBox="0 0 27 20"><g transform="translate(-24 -812)"><circle cx="37" cy="822.8" r="5" fill="#c75450"/><path d="M31.4 828.4 L42.8 817.3" stroke="#3c3f41" stroke-width="3.2"/><path d="M31.4 828.4 L42.8 817.3" stroke="#afb1b3" stroke-width="1.3"/></g></svg>
<div style="position:absolute;left:27px;top:839px;width:20px;height:1px;background:#505355;"></div>
<svg style="position:absolute;left:30px;top:849px;" width="18" height="17" viewBox="0 0 18 17"><g fill="#afb1b3"><circle cx="7" cy="7" r="4.8"/>
<rect x="5.5" y="0.5" width="3" height="13" rx="0.8"/>
<rect x="5.5" y="0.5" width="3" height="13" rx="0.8" transform="rotate(60 7 7)"/><rect x="5.5" y="0.5" width="3" height="13" rx="0.8" transform="rotate(-60 7 7)"/></g>
<circle cx="7" cy="7" r="1.8" fill="#3c3f41"/><path d="M11 13 H17 L14 16 Z" fill="#ffffff" /></svg>
<div style="position:absolute;left:27px;top:872px;width:20px;height:1px;background:#505355;"></div>
<svg style="position:absolute;left:29px;top:881px;" width="16" height="16" viewBox="0 0 16 16"><path d="M9 0 L16 7 L13 8 L10 11 L10 13 L3 6 L5 6 L8 3 Z" fill="#afb1b3"/><path d="M6 10 L0.5 15.5" stroke="#afb1b3" stroke-width="1.5"/></svg>
<div style="position:absolute;left:52px;top:719px;width:908px;height:1px;background:#2b2b2b;"></div>
<div id="t33" style="position:absolute;left:65.5px;top:698.30px;font-family:'Liberation Sans', sans-serif;font-size:15px;line-height:15px;color:#bbbbbb;font-weight:normal;white-space:pre;letter-spacing:-1.391px;">Frames</div>
<div style="position:absolute;left:233px;top:693px;width:1px;height:316px;background:#2b2b2b;"></div>
<div id="t34" style="position:absolute;left:247.5px;top:698.30px;font-family:'Liberation Sans', sans-serif;font-size:15px;line-height:15px;color:#bbbbbb;font-weight:normal;white-space:pre;letter-spacing:-0.602px;">Variables</div>
<div style="position:absolute;left:55px;top:723px;width:117px;height:21px;border:1px solid #5e6060;border-radius:3px;"></div>
<svg style="position:absolute;left:63px;top:729px;" width="12" height="12" viewBox="0 0 12 12"><circle cx="6" cy="6" r="6" fill="#d0672e"/></svg>
<div id="t35" style="position:absolute;left:81px;top:727.30px;font-family:'Liberation Sans', sans-serif;font-size:15px;line-height:15px;color:#bbbbbb;font-weight:normal;white-space:pre;letter-spacing:-0.191px;">Thr…-0_0</div>
<svg style="position:absolute;left:158px;top:733px;" width="10" height="6" viewBox="0 0 10 6"><path d="M0 0 H9 L4.5 5.5 Z" fill="#9a9c9e"/></svg>
<svg style="position:absolute;left:187px;top:727px;" width="11" height="15" viewBox="0 0 11 15"><path d="M5.5 1 V15 M1 5.5 L5.5 1 L10 5.5" fill="none" stroke="#5a5d5f" stroke-width="1.5"/></svg>
<svg style="position:absolute;left:212px;top:727px;" width="11" height="15" viewBox="0 0 11 15"><path d="M5.5 0 V14 M1 9.5 L5.5 14 L10 9.5" fill="none" stroke="#afb1b3" stroke-width="1.5"/></svg>
<div style="position:absolute;left:52px;top:752px;width:181px;height:22px;background:#2f65ca;"></div>
<svg style="position:absolute;left:61px;top:756px;" width="14" height="14" viewBox="0 0 14 14"><path d="M0 0 H10 V2 H2 V10 H0 Z" fill="#cfcabb"/><path d="M3 3 H13 V13 H3 Z M5 5 V11 H11 V5 Z" fill="#cfcabb" fill-rule="evenodd"/></svg>
<div id="t36" style="position:absolute;left:78.5px;top:756.30px;font-family:'Liberation Sans', sans-serif;font-size:15px;line-height:15px;color:#c8c8c8;font-weight:normal;white-space:pre;letter-spacing:0.285px;">root, main.py:9</div>
<div style="position:absolute;left:52px;top:774px;width:181px;height:22px;background:#4d4840;"></div>
<svg style="position:absolute;left:61px;top:778px;" width="14" height="14" viewBox="0 0 14 14"><path d="M0 0 H10 V2 H2 V10 H0 Z" fill="#c2c3c4"/><path d="M3 3 H13 V13 H3 Z M5 5 V11 H11 V5 Z" fill="#c2c3c4" fill-rule="evenodd"/></svg>
<div id="t37" style="position:absolute;left:78.5px;top:778.30px;font-family:'Liberation Sans', sans-serif;font-size:15px;line-height:15px;color:#858585;font-weight:normal;white-space:pre;letter-spacing:0.210px;">run, thread.py:56</div>
<div style="position:absolute;left:52px;top:796px;width:181px;height:22px;background:#4d4840;"></div>
<svg style="position:absolute;left:61px;top:800px;" width="14" height="14" viewBox="0 0 14 14"><path d="M0 0 H10 V2 H2 V10 H0 Z" fill="#c2c3c4"/><path d="M3 3 H13 V13 H3 Z M5 5 V11 H11 V5 Z" fill="#c2c3c4" fill-rule="evenodd"/></svg>
<div id="t38" style="position:absolute;left:78.5px;top:800.30px;font-family:'Liberation Sans', sans-serif;font-size:15px;line-height:15px;color:#858585;font-weight:normal;white-space:pre;letter-spacing:0.225px;">_worker, thread.py:69</div>
<div style="position:absolute;left:52px;top:818px;width:181px;height:22px;background:#4d4840;"></div>
<svg style="position:absolute;left:61px;top:822px;" width="14" height="14" viewBox="0 0 14 14"><path d="M0 0 H10 V2 H2 V10 H0 Z" fill="#c2c3c4"/><path d="M3 3 H13 V13 H3 Z M5 5 V11 H11 V5 Z" fill="#c2c3c4" fill-rule="evenodd"/></svg>
<div id="t39" style="position:absolute;left:78.5px;top:822.30px;font-family:'Liberation Sans', sans-serif;font-size:15px;line-height:15px;color:#858585;font-weight:normal;white-space:pre;letter-spacing:0.249px;">run, threading.py:864</div>
<div style="position:absolute;left:52px;top:840px;width:181px;height:22px;background:#4d4840;"></div>
<svg style="position:absolute;left:61px;top:844px;" width="14" height="14" viewBox="0 0 14 14"><path d="M0 0 H10 V2 H2 V10 H0 Z" fill="#c2c3c4"/><path d="M3 3 H13 V13 H3 Z M5 5 V11 H11 V5 Z" fill="#c2c3c4" fill-rule="evenodd"/></svg>
<div id="t40" style="position:absolute;left:78.5px;top:844.30px;font-family:'Liberation Sans', sans-serif;font-size:15px;line-height:15px;color:#858585;font-weight:normal;white-space:pre;letter-spacing:0.550px;width:154px;height:20px;overflow:hidden;">_bootstrap_inner, threading.py:884</div>
<div style="position:absolute;left:52px;top:862px;width:181px;height:22px;background:#4d4840;"></div>
<svg style="position:absolute;left:61px;top:866px;" width="14" height="14" viewBox="0 0 14 14"><path d="M0 0 H10 V2 H2 V10 H0 Z" fill="#c2c3c4"/><path d="M3 3 H13 V13 H3 Z M5 5 V11 H11 V5 Z" fill="#c2c3c4" fill-rule="evenodd"/></svg>
<div id="t41" style="position:absolute;left:78.5px;top:866.30px;font-family:'Liberation Sans', sans-serif;font-size:15px;line-height:15px;color:#858585;font-weight:normal;white-space:pre;letter-spacing:0.550px;width:154px;height:20px;overflow:hidden;">_bootstrap, threading.py:864</div>
<div style="position:absolute;left:258px;top:720px;width:1px;height:289px;background:#2b2b2b;"></div>
<svg style="position:absolute;left:241px;top:728px;" width="11" height="11" viewBox="0 0 11 11"><path d="M5.5 0 V11 M0 5.5 H11" stroke="#afb1b3" stroke-width="2"/></svg>
<div style="position:absolute;left:241px;top:758px;width:11px;height:2px;background:#5a5d5f;"></div>
<svg style="position:absolute;left:240px;top:781px;" width="13" height="8" viewBox="0 0 13 8"><path d="M0.5 7.5 L6.5 0.5 L12.5 7.5 Z" fill="#5a5d5f"/></svg>
<svg style="position:absolute;left:240px;top:806px;" width="13" height="8" viewBox="0 0 13 8"><path d="M0.5 0.5 L6.5 7.5 L12.5 0.5 Z" fill="#5a5d5f"/></svg>
<svg style="position:absolute;left:240px;top:830px;" width="14" height="14" viewBox="0 0 14 14"><rect x="0.75" y="0.75" width="8" height="9" fill="none" stroke="#afb1b3" stroke-width="1.5"/><rect x="3.5" y="3.5" width="10" height="10" fill="#afb1b3"/><path d="M5.5 6.5 H11.5 M5.5 9 H11.5 M5.5 11.5 H11.5" stroke="#3c3f41" stroke-width="1"/></svg>
<div style="position:absolute;left:235px;top:852px;width:22px;height:22px;background:#55585a;border-radius:3px"></div>
<svg style="position:absolute;left:238px;top:858px;" width="16" height="9" viewBox="0 0 16 9"><circle cx="4" cy="5" r="3.2" fill="none" stroke="#afb1b3" stroke-width="1.6"/><circle cx="12" cy="5" r="3.2" fill="none" stroke="#afb1b3" stroke-width="1.6"/><path d="M7 4.5 H9 M0.5 3 L1.5 1 M15.5 3 L14.5 1" stroke="#afb1b3" stroke-width="1.4"/></svg>
<div style="position:absolute;left:259px;top:721px;width:701px;height:22px;background:#2f65ca;"></div>
<div style="position:absolute;left:281px;top:726px;width:12px;height:12px;background:#3a96d0;color:#1d2a36;font:9px/12px 'Liberation Sans',sans-serif;text-align:center;letter-spacing:-0.2px">01</div>
<div id="t42" style="position:absolute;left:298px;top:724.80px;font-family:'Liberation Sans', sans-serif;font-size:15px;line-height:15px;color:#c8c8c8;font-weight:normal;white-space:pre;letter-spacing:0.049px;">a = {str} 'a'</div>
<div style="position:absolute;left:53px;top:1000px;width:117px;height:8px;background:#595b5d;"></div>
<div style="position:absolute;left:0px;top:1009px;width:960px;height:1px;background:#2b2b2b;"></div>
<div style="position:absolute;left:0px;top:1010px;width:960px;height:22px;background:#3c3f41;"></div>
<div style="position:absolute;left:22px;top:1010px;width:90px;height:22px;background:#2e3032;"></div>
<svg style="position:absolute;left:30px;top:1011px;" width="22" height="22" viewBox="0 0 22 22"><path d="M7.3 4.4 L9.4 6.9 M12.7 4.4 L10.6 6.9" stroke="#afb1b3" stroke-width="1.5"/>
<rect x="6.8" y="6.4" width="7.2" height="11.5" rx="3.2" fill="#afb1b3"/>
<rect x="4" y="8.2" width="12" height="1.6" fill="#afb1b3"/><rect x="4" y="11.7" width="12" height="1.6" fill="#afb1b3"/><rect x="4" y="14.9" width="12" height="1.6" fill="#afb1b3"/>
<rect x="8.4" y="10" width="3.8" height="1.3" fill="#2e3032"/><rect x="8.4" y="13.2" width="3.8" height="1.3" fill="#2e3032"/>
<circle cx="14.3" cy="15.2" r="3" fill="#2e3032"/><circle cx="14.3" cy="15.2" r="2.2" fill="#00e000"/></svg>
<div id="t43" style="position:absolute;left:50px;top:1013.30px;font-family:'Liberation Sans', sans-serif;font-size:15px;line-height:15px;color:#dcdcdc;font-weight:normal;white-space:pre;letter-spacing:-1.111px;"><u>5</u>: Debug</div>
<svg style="position:absolute;left:125px;top:1015px;" width="11" height="11" viewBox="0 0 11 11"><g fill="#afb1b3"><rect x="0" y="0" width="2" height="2"/><rect x="3.5" y="0" width="7.5" height="2"/><rect x="0" y="4.5" width="2" height="2"/><rect x="3.5" y="4.5" width="7.5" height="2"/><rect x="0" y="9" width="2" height="2"/><rect x="3.5" y="9" width="7.5" height="2"/></g></svg>
<div id="t44" style="position:absolute;left:140px;top:1013.30px;font-family:'Liberation Sans', sans-serif;font-size:15px;line-height:15px;color:#bbbbbb;font-weight:normal;white-space:pre;letter-spacing:-1.496px;"><u>6</u>: TODO</div>
<svg style="position:absolute;left:208px;top:1014px;" width="15" height="15" viewBox="0 0 15 15"><g transform="translate(0.5 0.5) scale(0.84375)"><path d="M7.9 0 C4 0 4.3 1.7 4.3 1.7 V3.4 H8 V4 H2.8 C2.8 4 0 3.7 0 8 C0 12.2 2.4 12 2.4 12 H3.9 V10 C3.9 10 3.8 7.6 6.3 7.6 H10 C10 7.6 12.3 7.6 12.3 5.4 V1.9 C12.3 1.9 12.6 0 7.9 0 Z" fill="#5b9bd5"/><path d="M8.1 16 C12 16 11.7 14.3 11.7 14.3 V12.6 H8 V12 H13.2 C13.2 12 16 12.3 16 8 C16 3.8 13.6 4 13.6 4 H12.1 V6 C12.1 6 12.2 8.4 9.7 8.4 H6 C6 8.4 3.7 8.4 3.7 10.6 V14.1 C3.7 14.1 3.4 16 8.1 16 Z" fill="#c9c9c9"/></g></svg>
<div id="t45" style="position:absolute;left:227px;top:1013.30px;font-family:'Liberation Sans', sans-serif;font-size:15px;line-height:15px;color:#bbbbbb;font-weight:normal;white-space:pre;letter-spacing:-1.211px;">Mypy</div>
<svg style="position:absolute;left:278px;top:1015px;" width="12" height="11" viewBox="0 0 12 11"><rect x="0" y="0" width="12" height="11" fill="#afb1b3"/><path d="M2.5 2.5 L5 5 L2.5 7.5 M5.5 8.5 H9" fill="none" stroke="#3c3f41" stroke-width="1.2"/></svg>
<div id="t46" style="position:absolute;left:295px;top:1013.30px;font-family:'Liberation Sans', sans-serif;font-size:15px;line-height:15px;color:#bbbbbb;font-weight:normal;white-space:pre;letter-spacing:-0.836px;">Terminal</div>
<svg style="position:absolute;left:368px;top:1014px;" width="13" height="13" viewBox="0 0 13 13"><g transform="translate(0 0) scale(0.75)"><path d="M7.9 0 C4 0 4.3 1.7 4.3 1.7 V3.4 H8 V4 H2.8 C2.8 4 0 3.7 0 8 C0 12.2 2.4 12 2.4 12 H3.9 V10 C3.9 10 3.8 7.6 6.3 7.6 H10 C10 7.6 12.3 7.6 12.3 5.4 V1.9 C12.3 1.9 12.6 0 7.9 0 Z" fill="#afb1b3"/><path d="M8.1 16 C12 16 11.7 14.3 11.7 14.3 V12.6 H8 V12 H13.2 C13.2 12 16 12.3 16 8 C16 3.8 13.6 4 13.6 4 H12.1 V6 C12.1 6 12.2 8.4 9.7 8.4 H6 C6 8.4 3.7 8.4 3.7 10.6 V14.1 C3.7 14.1 3.4 16 8.1 16 Z" fill="#afb1b3"/></g></svg>
<div id="t47" style="position:absolute;left:385px;top:1013.30px;font-family:'Liberation Sans', sans-serif;font-size:15px;line-height:15px;color:#bbbbbb;font-weight:normal;white-space:pre;letter-spacing:-0.958px;">Python Console</div>
<svg style="position:absolute;left:850px;top:1014px;" width="14" height="14" viewBox="0 0 14 14"><circle cx="7" cy="7" r="6.8" fill="#499c54"/><text x="7" y="10.5" font-family="Liberation Sans" font-weight="bold" font-size="9.5" fill="#ffffff" text-anchor="middle">3</text></svg>
<div id="t48" style="position:absolute;left:867.5px;top:1013.30px;font-family:'Liberation Sans', sans-serif;font-size:15px;line-height:15px;color:#bbbbbb;font-weight:normal;white-space:pre;letter-spacing:-1.007px;">Event Log</div>
<div style="position:absolute;left:0px;top:1032px;width:960px;height:1px;background:#4a4946;"></div>
<div style="position:absolute;left:0px;top:1033px;width:960px;height:20px;background:#3c3f41;"></div>
<svg style="position:absolute;left:5px;top:1036px;" width="14" height="14" viewBox="0 0 14 14"><path d="M3 0.75 H13.25 V11 M0.75 3 H10.75 V13.25 H0.75 Z" fill="none" stroke="#afb1b3" stroke-width="1.4"/></svg>
<div id="t49" style="position:absolute;left:27.5px;top:1035.30px;font-family:'Liberation Sans', sans-serif;font-size:15px;line-height:15px;color:#bbbbbb;font-weight:normal;white-space:pre;letter-spacing:0.179px;">Python Debugger Extension Avail... (moments ago)</div>
<div id="t50" style="position:absolute;left:386px;top:1035.30px;font-family:'Liberation Sans', sans-serif;font-size:15px;line-height:15px;color:#bbbbbb;font-weight:normal;white-space:pre;letter-spacing:-0.620px;">9:1</div>
<div id="t51" style="position:absolute;left:417px;top:1035.30px;font-family:'Liberation Sans', sans-serif;font-size:15px;line-height:15px;color:#bbbbbb;font-weight:normal;white-space:pre;letter-spacing:-0.758px;">LF</div>
<div id="t52" style="position:absolute;left:445.5px;top:1035.30px;font-family:'Liberation Sans', sans-serif;font-size:15px;line-height:15px;color:#bbbbbb;font-weight:normal;white-space:pre;letter-spacing:-0.800px;">UTF-8</div>
<div id="t53" style="position:absolute;left:495px;top:1035.30px;font-family:'Liberation Sans', sans-serif;font-size:15px;line-height:15px;color:#bbbbbb;font-weight:normal;white-space:pre;letter-spacing:-0.318px;">4 spaces</div>
<div id="t54" style="position:absolute;left:564px;top:1035.30px;font-family:'Liberation Sans', sans-serif;font-size:15px;line-height:15px;color:#bbbbbb;font-weight:normal;white-space:pre;letter-spacing:0.159px;">Python 3.6 (pycharmdebugfastapi-9cdjtyrg-py3.6)</div>
<svg style="position:absolute;left:911px;top:1036px;" width="13" height="13" viewBox="0 0 13 13"><path d="M2 5.5 V3.5 A3 3 0 0 1 8 3.5" fill="none" stroke="#afb1b3" stroke-width="1.6"/><rect x="0" y="6" width="10" height="7" fill="#afb1b3"/></svg>
<svg style="position:absolute;left:935px;top:1035px;" width="14" height="14" viewBox="0 0 14 14"><path d="M3 4 L4 0.5 H10 L11 4 Z" fill="#afb1b3"/><rect x="0.5" y="4" width="13" height="1.5" fill="#afb1b3"/><circle cx="4.5" cy="7.5" r="2" fill="#afb1b3"/><circle cx="9.5" cy="7.5" r="2" fill="#afb1b3"/><path d="M2 13.5 C2 10 12 10 12 13.5 Z" fill="#afb1b3"/></svg>
</body></html>
